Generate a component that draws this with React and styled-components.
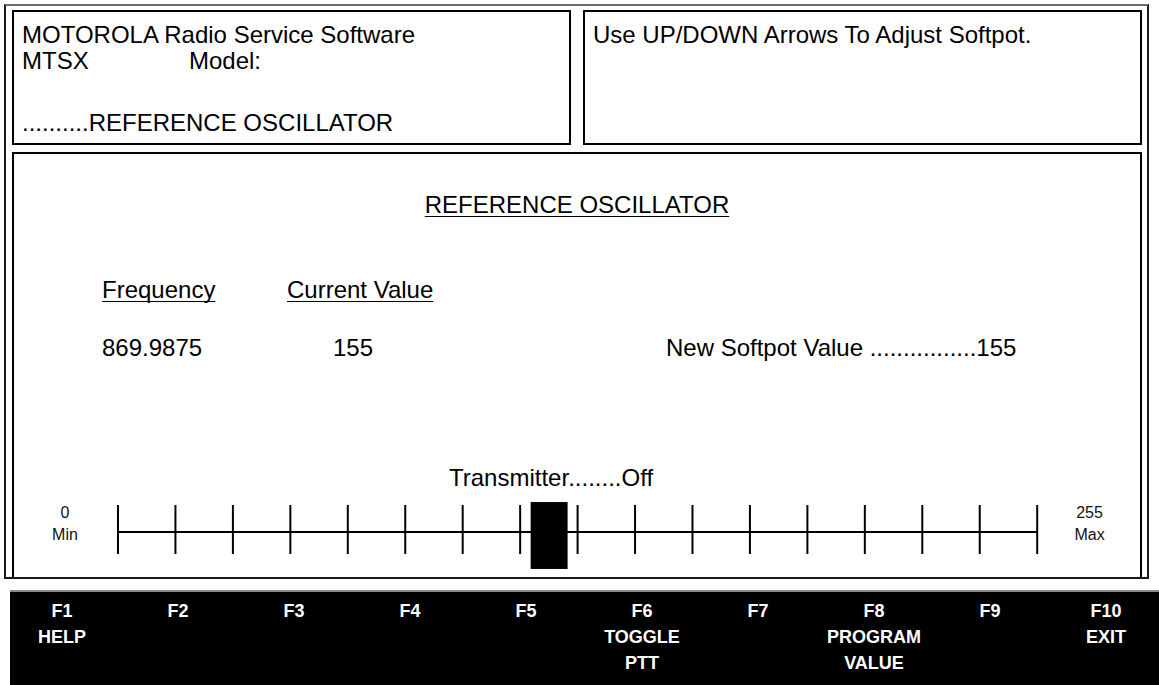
import React from "react";
import styled, { createGlobalStyle } from "styled-components";

const GlobalStyle = createGlobalStyle`
  html, body {
    margin: 0;
    padding: 0;
    background: #fff;
  }
  body {
    font-family: "Liberation Sans", Arial, sans-serif;
    color: #000;
    width: 1159px;
    height: 685px;
    overflow: hidden;
  }
`;

const Frame = styled.div`
  box-sizing: border-box;
  margin: 4px 0 0 4px;
  width: 1145px;
  height: 575px;
  border: 2px solid #1a1a1a;
  border-top-color: #6e6e6e;
  padding: 4px 5px 0 6px;
  display: flex;
  flex-direction: column;
`;

const TopRow = styled.div`
  display: grid;
  grid-template-columns: 1fr 1fr;
  gap: 12px;
  height: 135px;
`;

const InfoPanel = styled.div`
  box-sizing: border-box;
  border: 2px solid #000;
  padding: 10px 8px 0;
  font-size: 24px;
  line-height: 26px;
`;

const Line = styled.div`
  height: ${(p) => p.$h || 26}px;
  white-space: nowrap;
`;

const Label = styled.span`
  display: inline-block;
  width: ${(p) => p.$w}px;
`;

const MainPanel = styled.div`
  box-sizing: border-box;
  flex: 1;
  margin-top: 7px;
  border: 2px solid #000;
  border-bottom: none;
  font-size: 24px;
  line-height: 30px;
  display: flex;
  flex-direction: column;
`;

const Heading = styled.div`
  margin-top: 36px;
  text-align: center;
  text-decoration: underline;
  text-decoration-skip-ink: none;
  text-underline-offset: 3px;
  text-decoration-thickness: 1px;
`;

const Row = styled.div`
  display: grid;
  grid-template-columns: 185px 379px 1fr;
  padding-left: 88px;
  margin-top: ${(p) => p.$top}px;
  white-space: nowrap;
`;

const ColHead = styled.span`
  text-decoration: underline;
  text-decoration-skip-ink: none;
  text-underline-offset: 3px;
  text-decoration-thickness: 1px;
`;

const Value = styled.span`
  padding-left: ${(p) => p.$indent || 0}px;
`;

const Status = styled.div`
  margin-top: 100px;
  padding-left: 435px;
  white-space: nowrap;
`;

const ScaleRow = styled.div`
  margin-top: 9px;
  display: flex;
  align-items: flex-start;
`;

const EndLabel = styled.div`
  width: ${(p) => p.$w}px;
  text-align: center;
  font-size: 16px;
  line-height: 22px;
  color: #111;
`;

const KeyBar = styled.div`
  box-sizing: border-box;
  margin: 11px 0 0 10px;
  height: 95px;
  background: #000;
  border-top: 2px solid #8a8a8a;
  padding-top: 6px;
`;

const KeyGrid = styled.div`
  display: grid;
  grid-template-columns: repeat(10, 116px);
  margin-left: -6px;
`;

const Key = styled.div`
  color: #fff;
  font-weight: 700;
  font-size: 18px;
  line-height: 26px;
  text-align: center;
  white-space: nowrap;
`;

const keys = [
  ["F1", "HELP"],
  ["F2"],
  ["F3"],
  ["F4"],
  ["F5"],
  ["F6", "TOGGLE", "PTT"],
  ["F7"],
  ["F8", "PROGRAM", "VALUE"],
  ["F9"],
  ["F10", "EXIT"],
];

const Scale = () => {
  const ticks = Array.from({ length: 17 }, (_, i) => 2 + i * 57.5);
  return (
    <svg width="924" height="67" viewBox="0 0 924 67">
      <line x1="2" y1="30" x2={ticks[16]} y2="30" stroke="#000" strokeWidth="2" />
      {ticks.map((x) => (
        <line key={x} x1={x} y1="3" x2={x} y2="52" stroke="#000" strokeWidth="2" />
      ))}
      <rect x="415" y="0" width="37" height="67" fill="#000" />
    </svg>
  );
};

export default function App() {
  return (
    <>
      <GlobalStyle />
      <Frame>
        <TopRow>
          <InfoPanel>
            <Line>MOTOROLA Radio Service Software</Line>
            <Line>
              <Label $w={167}>MTSX</Label>Model:
            </Line>
            <Line $h={36} />
            <Line>..........REFERENCE OSCILLATOR</Line>
          </InfoPanel>
          <InfoPanel>
            <Line>Use UP/DOWN Arrows To Adjust Softpot.</Line>
          </InfoPanel>
        </TopRow>
        <MainPanel>
          <Heading>REFERENCE OSCILLATOR</Heading>
          <Row $top={55}>
            <ColHead>Frequency</ColHead>
            <ColHead>Current Value</ColHead>
            <span />
          </Row>
          <Row $top={28}>
            <Value>869.9875</Value>
            <Value $indent={46}>155</Value>
            <Value>New Softpot Value ................155</Value>
          </Row>
          <Status>Transmitter........Off</Status>
          <ScaleRow>
            <EndLabel $w={102}>
              0<br />Min
            </EndLabel>
            <Scale />
            <EndLabel $w={101}>
              255<br />Max
            </EndLabel>
          </ScaleRow>
        </MainPanel>
      </Frame>
      <KeyBar>
        <KeyGrid>
          {keys.map((k) => (
            <Key key={k[0]}>
              {k.map((t) => (
                <div key={t}>{t}</div>
              ))}
            </Key>
          ))}
        </KeyGrid>
      </KeyBar>
    </>
  );
}
